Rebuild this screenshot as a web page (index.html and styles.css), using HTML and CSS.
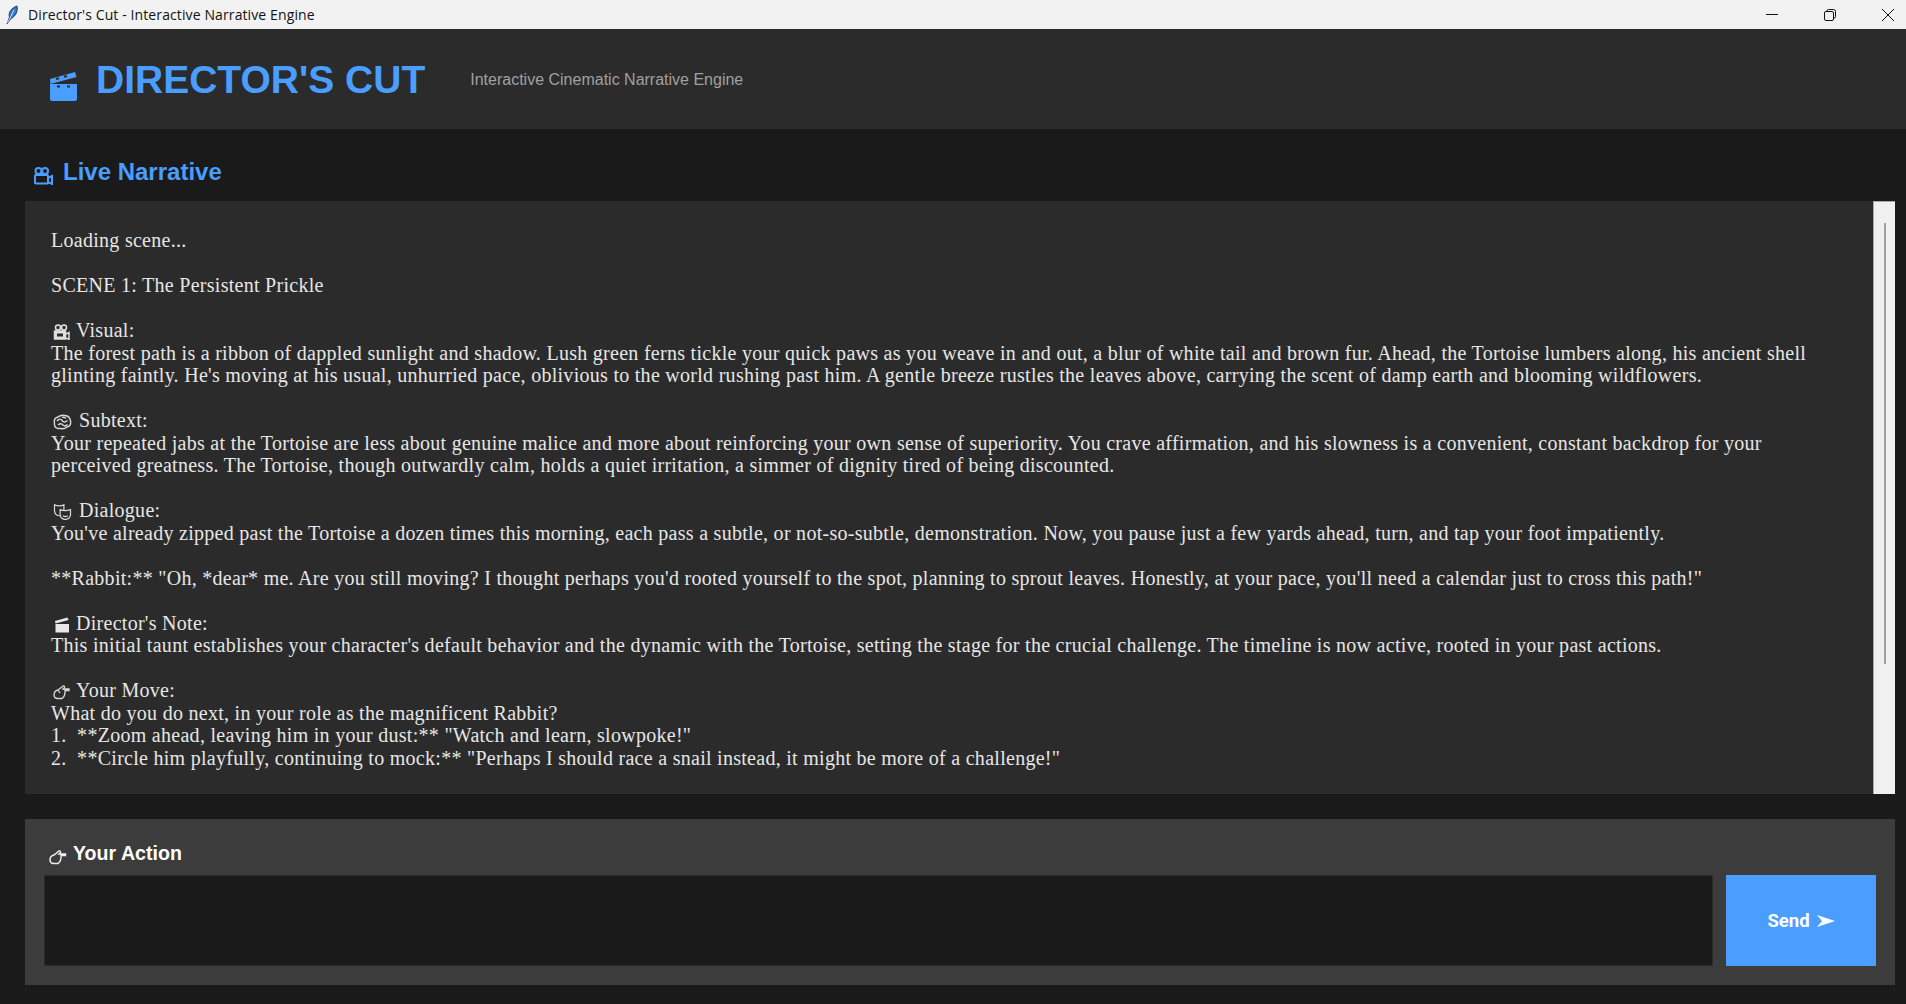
FILE: index.html
```html
<!DOCTYPE html>
<html lang="en">
<head>
    <meta charset="UTF-8">
    <meta name="viewport" content="width=device-width, initial-scale=1.0">
    <title>Director's Cut - Interactive Narrative Engine</title>
    <link rel="stylesheet" href="styles.css">
</head>
<body>
    <div class="titlebar">
        <svg class="feather" viewBox="0 0 14 20">
            <path d="M2 19 L4.5 12 C3 8 6 3 12 1 C13 6 11 11 6 13.5 L2 19Z" fill="#3d78c4" stroke="#1d3f70" stroke-width="1"/>
            <path d="M2.5 18 L9 5" stroke="#cfe0f5" stroke-width="1" fill="none"/>
        </svg>
        <span class="window-title">Director's Cut - Interactive Narrative Engine</span>
        <div class="window-buttons">
            <svg viewBox="0 0 12 12"><path d="M0 5.500H12" stroke="#111" fill="none"/></svg>
            <svg viewBox="0 0 12 12"><rect x="0.5" y="2.5" width="9" height="9" rx="1.5" fill="none" stroke="#111"/><path d="M3 2.5V2Q3 .5 4.5 .5H9.5Q11.5 .5 11.5 2.500V7.500Q11.500 9 10 9" fill="none" stroke="#111"/></svg>
            <svg viewBox="0 0 12 12"><path d="M0 0L12 12M12 0L0 12" stroke="#111" fill="none"/></svg>
        </div>
    </div>

    <header class="app-header">
        <svg class="clapper-big" viewBox="0 0 28 30">
            <path d="M1 8 L26 1 L27.500 6 L1.500 13Z" fill="#4a9eff"/>
            <path d="M7 8 L10 7.200 M15 5.800 L18 5" stroke="#2b2b2b" stroke-width="2"/>
            <path d="M1 13H28V28Q28 30 26 30H3Q1 30 1 28Z" fill="#4a9eff"/>
            <path d="M8 15.500H11M18 15.500H21" stroke="#2b2b2b" stroke-width="2"/>
        </svg>
        <h1>DIRECTOR'S CUT</h1>
        <span class="subtitle">Interactive Cinematic Narrative Engine</span>
    </header>

    <main class="content">
        <h2 class="section-title">
            <svg class="camera-big" viewBox="0 0 20 18">
                <g fill="none" stroke="#4a9eff" stroke-width="2">
                    <circle cx="5.500" cy="4" r="3"/>
                    <circle cx="12" cy="4" r="3"/>
                    <rect x="2" y="8" width="13" height="8.500" rx="1"/>
                    <path d="M15 11 L19 9 V17 L15 15"/>
                </g>
            </svg>
            Live Narrative
        </h2>

        <section class="story-panel">
            <div class="story">
                <p>Loading scene...</p>
                <p>SCENE 1: The Persistent Prickle</p>
                <p>
                    <svg class="emoji emoji-camera" viewBox="0 0 17 16">
                        <g fill="none" stroke="#e0e0e0" stroke-width="1.500">
                            <circle cx="5" cy="3.500" r="2.500"/>
                            <circle cx="11" cy="3.500" r="2.500"/>
                            <rect x="1.500" y="7" width="11" height="8" fill="#e0e0e0"/>
                            <path d="M13 10 L16 8.500 V15.500 L13 14"/>
                        </g>
                        <rect x="4" y="9.500" width="6" height="3" fill="#2b2b2b"/>
                    </svg>Visual:<br>
                    The forest path is a ribbon of dappled sunlight and shadow. Lush green ferns tickle your quick paws as you weave in and out, a blur of white tail and brown fur. Ahead, the Tortoise lumbers along, his ancient shell<br>
                    glinting faintly. He's moving at his usual, unhurried pace, oblivious to the world rushing past him. A gentle breeze rustles the leaves above, carrying the scent of damp earth and blooming wildflowers.
                </p>
                <p>
                    <svg class="emoji emoji-wide" viewBox="0 0 19 16">
                        <g fill="none" stroke="#d8d8d8" stroke-width="1.400">
                            <path d="M5 14.500 Q1 13.500 1.500 9 Q0.500 4 5 3 Q8 0.500 12 1.500 Q17 2 17.500 7 Q18.500 12 14 13 Q11 15.500 8 14.500 L5 14.500Z"/>
                            <path d="M4 7 Q7 3.500 9 6.500 Q11 9.500 14.500 6.500 M5 11 Q8 8.500 10 11 Q12 13 14.500 10.500 M9 3.500 Q12 2.500 13 4.500"/>
                        </g>
                    </svg>Subtext:<br>
                    Your repeated jabs at the Tortoise are less about genuine malice and more about reinforcing your own sense of superiority. You crave affirmation, and his slowness is a convenient, constant backdrop for your<br>
                    perceived greatness. The Tortoise, though outwardly calm, holds a quiet irritation, a simmer of dignity tired of being discounted.
                </p>
                <p>
                    <svg class="emoji emoji-wide" viewBox="0 0 19 17">
                        <g fill="#2b2b2b" stroke="#d8d8d8" stroke-width="1.300">
                            <path d="M1 1 Q6 3 11 1 V7 Q11 12 6 12.500 Q1 12 1 7Z"/>
                            <path d="M7 6 Q12 8 18 6 V11 Q18 16 12.500 16.500 Q7 16 7 11Z"/>
                            <path d="M10 12.500 Q12.500 14.500 15 12.500" fill="none"/>
                        </g>
                    </svg>Dialogue:<br>
                    You've already zipped past the Tortoise a dozen times this morning, each pass a subtle, or not-so-subtle, demonstration. Now, you pause just a few yards ahead, turn, and tap your foot impatiently.
                </p>
                <p>**Rabbit:** "Oh, *dear* me. Are you still moving? I thought perhaps you'd rooted yourself to the spot, planning to sprout leaves. Honestly, at your pace, you'll need a calendar just to cross this path!"</p>
                <p>
                    <svg class="emoji emoji-clapper" viewBox="0 0 14 15">
                        <path d="M0 3.500 L12.500 0 L13.500 2.500 L0.500 6Z" fill="#e8e8e8"/>
                        <path d="M0.500 6.500H14V15H0.500Z" fill="#e8e8e8"/>
                    </svg>Director's Note:<br>
                    This initial taunt establishes your character's default behavior and the dynamic with the Tortoise, setting the stage for the crucial challenge. The timeline is now active, rooted in your past actions.
                </p>
                <p>
                    <svg class="emoji emoji-camera" viewBox="0 0 17 16">
                        <path d="M1 11 Q1 7 5 6 L10 2 Q12 1.500 11.500 3.500 L10 5 H16 V6.500 H12 V9 Q11.500 13 9 14.500 H4 Q1 14 1 11Z M5 6 L7 9" fill="none" stroke="#d8d8d8" stroke-width="1.300"/>
                    </svg>Your Move:<br>
                    What do you do next, in your role as the magnificent Rabbit?<br>
                    1.&nbsp; **Zoom ahead, leaving him in your dust:** "Watch and learn, slowpoke!"<br>
                    2.&nbsp; **Circle him playfully, continuing to mock:** "Perhaps I should race a snail instead, it might be more of a challenge!"
                </p>
            </div>
            <div class="scrollbar"><div class="scroll-thumb"></div></div>
        </section>

        <section class="action-panel">
            <h3 class="action-title">
                <svg class="hand" viewBox="0 0 18 16">
                    <path d="M1 11 Q1 7 5 6 L10 2 Q12 1.500 11.500 3.500 L10 5 H16.500 V6.500 H12 V9 Q11.500 13 9 14.500 H4 Q1 14 1 11Z" fill="#3c3c3c" stroke="#f0f0f0" stroke-width="1.400"/>
                </svg>
                Your Action
            </h3>
            <div class="action-row">
                <div class="action-input"></div>
                <button class="send-btn">Send
                    <svg class="send-arrow" viewBox="0 0 18 12"><path d="M0 0 L18 6 L0 12 L5 6Z" fill="#ffffff"/></svg>
                </button>
            </div>
        </section>
    </main>
</body>
</html>
```

FILE: styles.css
```css
html, body {
    height: 100%;
}
body {
    margin: 0;
    display: flex;
    flex-direction: column;
    overflow: hidden;
    background-color: #1a1a1a;
    font-family: "Liberation Sans", Arial, sans-serif;
}
.titlebar {
    height: 29px;
    flex: none;
    display: flex;
    align-items: center;
    background-color: #f2f2f2;
    color: #111;
}
.feather {
    width: 14px;
    height: 20px;
    margin-left: 5px;
    margin-right: 9px;
}
.window-title {
    font-family: "Open Sans", sans-serif;
    font-size: 14px;
    letter-spacing: 0.11px;
}
.window-buttons {
    margin-left: auto;
    display: flex;
    gap: 46px;
    margin-right: 12px;
}
.window-buttons svg {
    width: 12px;
    height: 12px;
    display: block;
}
.app-header {
    height: 100px;
    flex: none;
    display: flex;
    align-items: center;
    padding: 2px 0 0 49px;
    box-sizing: border-box;
    background-color: #2b2b2b;
}
.clapper-big {
    width: 28px;
    height: 30px;
    margin-top: 12px;
    margin-right: 19px;
}
.app-header h1 {
    margin: 0;
    font-size: 39px;
    font-weight: bold;
    color: #4a9eff;
}
.subtitle {
    margin-left: 45px;
    font-size: 16px;
    color: #a0a0a0;
}
.content {
    flex: 1;
    display: flex;
    flex-direction: column;
    min-height: 0;
    padding: 0 11px 19px 25px;
}
.section-title {
    height: 72px;
    flex: none;
    margin: 0;
    display: flex;
    align-items: center;
    padding: 14px 0 0 8px;
    box-sizing: border-box;
    font-size: 24px;
    font-weight: bold;
    color: #4a9eff;
}
.camera-big {
    width: 20px;
    height: 18px;
    margin-top: 8px;
    margin-right: 10px;
}
.story-panel {
    flex: 1;
    display: flex;
    min-height: 0;
    background-color: #2b2b2b;
}
.story {
    flex: 1;
    padding: 28px 0 0 26px;
    overflow: hidden;
    white-space: nowrap;
    font-family: "Liberation Serif", Georgia, serif;
    font-size: 20px;
    letter-spacing: 0.28px;
    line-height: 22.5px;
    color: #e6e6e6;
}
.story p {
    margin: 0 0 22.5px 0;
}
.emoji {
    height: 16px;
    vertical-align: -3px;
    margin-left: 2px;
    margin-right: 6px;
}
.emoji-camera {
    width: 17px;
}
.emoji-wide {
    width: 19px;
    margin-right: 7px;
}
.emoji-clapper {
    width: 14px;
    margin-left: 4px;
    margin-right: 7px;
}
.scrollbar {
    width: 22px;
    flex: none;
    box-sizing: border-box;
    padding-top: 21px;
    background-color: #f0f0f0;
    border: 1px solid #a8a8a8;
    border-right: none;
    border-bottom: none;
}
.scroll-thumb {
    width: 2px;
    height: 441px;
    margin-left: 10px;
    background-color: #a0a0a0;
}
.action-panel {
    height: 166px;
    flex: none;
    margin-top: 25px;
    box-sizing: border-box;
    padding: 0 19px 19px 19px;
    display: flex;
    flex-direction: column;
    background-color: #3c3c3c;
}
.action-title {
    height: 56px;
    flex: none;
    margin: 0;
    display: flex;
    align-items: center;
    padding-top: 13px;
    box-sizing: border-box;
    font-size: 19.600px;
    font-weight: bold;
    color: #ffffff;
}
.hand {
    width: 18px;
    height: 16px;
    margin-top: 6px;
    margin-right: 6px;
    margin-left: 5px;
}
.action-row {
    flex: 1;
    display: flex;
    gap: 13px;
}
.action-input {
    flex: 1;
    background-color: #1a1a1a;
    border: 1px solid #2b2b2b;
}
.send-btn {
    width: 150px;
    display: flex;
    align-items: center;
    justify-content: center;
    gap: 7px;
    border: none;
    background-color: #4a9eff;
    color: #ffffff;
    font-family: "Roboto", sans-serif;
    font-size: 18.500px;
    font-weight: bold;
    padding: 0;
}
.send-arrow {
    width: 18px;
    height: 12px;
}
```
